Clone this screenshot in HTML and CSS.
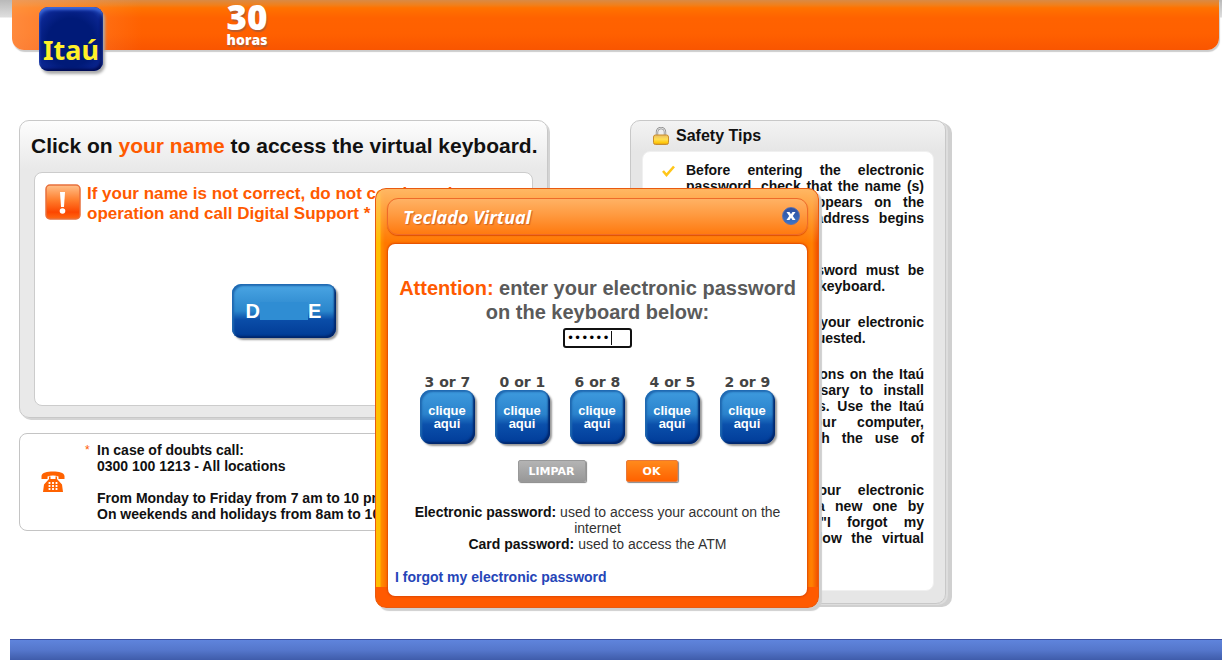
FILE: index.html
```
<!DOCTYPE html>
<html lang="en">
<head>
<meta charset="UTF-8">
<meta name="viewport" content="width=device-width, initial-scale=1.0">
<title>Itaú 30 horas</title>
<link rel="stylesheet" href="styles.css">
</head>
<body>
  <header class="header">
    <div class="header-bar">
      <div class="logo">Itaú</div>
      <div class="horas"><b>30</b><span>horas</span></div>
    </div>
  </header>

  <main class="content">
    <div class="left">
      <section class="panel access">
        <h1>Click on <em>your name</em> to access the virtual keyboard.</h1>
        <div class="panel-box">
          <div class="warning">
            <svg width="36" height="36" viewBox="0 0 36 36">
              <defs>
                <linearGradient id="warn" x1="0" y1="0" x2="0" y2="1">
                  <stop offset="0" stop-color="#ffc08a"/>
                  <stop offset="0.45" stop-color="#ff7d2c"/>
                  <stop offset="0.8" stop-color="#fc4600"/>
                  <stop offset="1" stop-color="#ff6a14"/>
                </linearGradient>
              </defs>
              <rect x="1" y="1" width="34" height="34" rx="4" fill="url(#warn)" stroke="#e8703c" stroke-width="1.5"/>
              <path d="M15 8h5l-1 15h-3z" fill="#fff"/>
              <circle cx="17.5" cy="27" r="2.8" fill="#fff"/>
            </svg>
            <p>If your name is not correct, do not continue the<br>operation and call Digital Support *</p>
          </div>
          <button type="button" class="name-button"><span>D</span><i></i><span>E</span></button>
        </div>
      </section>

      <section class="phone">
        <svg width="24" height="22" viewBox="0 0 24 22">
          <path d="M0.5 8V5C1 1.5 6 0.5 12 0.5S23 1.5 23.5 5V8H17.5V5.5C14 4.3 10 4.3 6.5 5.5V8Z" fill="#ff6200"/>
          <path d="M8 5.5V8L3 13.5 2 21h20l-1-7.5L16 8V5.5h-1.5V8h-5V5.5Z" fill="#ff6200"/>
          <path d="M8.5 11v8M12 11v8M15.5 11v8" stroke="#fff" stroke-width="1.8" stroke-dasharray="2 1"/>
        </svg>
        <span class="star">*</span>
        <div>
          <p>In case of doubts call:<br>0300 100 1213 - All locations</p>
          <p>From Monday to Friday from 7 am to 10 pm<br>On weekends and holidays from 8am to 10</p>
        </div>
      </section>
    </div>

    <aside class="panel tips">
      <h2>
        <svg width="16" height="18" viewBox="0 0 16 18">
          <defs>
            <linearGradient id="lock" x1="0" y1="0" x2="0" y2="1">
              <stop offset="0" stop-color="#e9bd63"/>
              <stop offset="0.45" stop-color="#ffdf55"/>
              <stop offset="0.8" stop-color="#ffc90c"/>
              <stop offset="1" stop-color="#db9a1c"/>
            </linearGradient>
          </defs>
          <path d="M4 9V5a4 4 0 0 1 8 0v4" fill="none" stroke="#8f8f8f" stroke-width="2.4"/>
          <path d="M4 9V5a4 4 0 0 1 8 0v4" fill="none" stroke="#dcdcdc" stroke-width="1"/>
          <rect x="0.5" y="8" width="15" height="9.5" rx="2" fill="url(#lock)" stroke="#c98e2e"/>
        </svg>
        Safety Tips
      </h2>
      <ul>
        <li>
          <svg width="13" height="12" viewBox="0 0 13 12"><path d="M1 6 4.5 10 12 1.5" fill="none" stroke="#ffc61a" stroke-width="2.6"/></svg>
          <span>Before entering the electronic</span>
          <span>password, check that the name (s)</span>
          <span>of the account appears on the</span>
          <span>browser and the address begins</span>
          <span>with https.</span>
        </li>
        <li>
          <span>Your personal password must be</span>
          <span>typed on the virtual keyboard.</span>
        </li>
        <li>
          <span>Never say or type your electronic</span>
          <span>cards when it is requested.</span>
        </li>
        <li>
          <span>Follow our instructions on the Itaú</span>
          <span>site if it is necessary to install</span>
          <span>alternative browsers. Use the Itaú</span>
          <span>Guardian on your computer,</span>
          <span>it guards you with the use of</span>
          <span>the site.</span>
        </li>
        <li>
          <span>If you forgot your electronic</span>
          <span>password, create a new one by</span>
          <span>choosing below "I forgot my</span>
          <span>password" just below the virtual</span>
          <span>keyboard.</span>
        </li>
      </ul>
    </aside>
  </main>

  <footer class="footer"></footer>

  <div class="modal" role="dialog" aria-label="Teclado Virtual">
    <div class="modal-title">
      <strong>Teclado Virtual</strong>
      <button type="button" class="close" aria-label="Close">
        <svg width="10" height="10" viewBox="0 0 10 10"><path d="M0.5 1h3L5 3.3 6.5 1h3L6.8 5l2.7 4h-3L5 6.7 3.5 9h-3L3.2 5z" fill="#fff"/></svg>
      </button>
    </div>
    <form class="modal-body">
      <label for="password"><em>Attention:</em> enter your electronic password<br>on the keyboard below:</label>
      <input type="password" id="password" value="123456" maxlength="8">

      <div class="keys">
        <div class="key"><span>3 or 7</span><button type="button">clique<br>aqui</button></div>
        <div class="key"><span>0 or 1</span><button type="button">clique<br>aqui</button></div>
        <div class="key"><span>6 or 8</span><button type="button">clique<br>aqui</button></div>
        <div class="key"><span>4 or 5</span><button type="button">clique<br>aqui</button></div>
        <div class="key"><span>2 or 9</span><button type="button">clique<br>aqui</button></div>
      </div>

      <div class="actions">
        <button type="reset" class="clear">LIMPAR</button>
        <button type="submit" class="ok">OK</button>
      </div>

      <p class="help"><b>Electronic password:</b> used to access your account on the internet<br><b>Card password:</b> used to access the ATM</p>
      <a href="#" class="forgot">I forgot my electronic password</a>
    </form>
  </div>
</body>
</html>
```
FILE: styles.css
```
* {
  box-sizing: border-box;
}
body {
  position: relative;
  display: flex;
  flex-direction: column;
  min-height: 100vh;
  margin: 0;
  background: #fff;
  color: #111;
  font-family: "Liberation Sans", Arial, sans-serif;
}
h1, h2, p, ul {
  margin: 0;
  padding: 0;
}
em {
  color: #ff5a00;
  font-style: normal;
}
button {
  padding: 0;
  border: 0;
  cursor: pointer;
}

/* Header */
.header {
  height: 120px;
  padding: 0 3px 0 12px;
  background: linear-gradient(#b9b9b9, #dedede 17px, #fff 18px);
}
.header-bar {
  display: flex;
  align-items: flex-start;
  height: 50px;
  padding-left: 27px;
  border-radius: 0 0 12px 12px;
  background:
    linear-gradient(90deg, rgba(255, 165, 100, 0.6), rgba(255, 120, 40, 0) 130px),
    linear-gradient(#d98a45, #f0801c 5px, #ff7200 8px, #ff6200 18px, #ff6000 34px, #f95500);
  box-shadow: 1px 2px 1px #ccc;
}
.logo {
  width: 64px;
  height: 64px;
  margin-top: 7px;
  border-radius: 9px;
  background: radial-gradient(circle at 50% 55%, #001a78 50%, #0a2590 75%, #2a55c8);
  box-shadow: inset 0 3px 3px #3f68d8, inset -2px -2px 3px #000a50, 2px 3px 3px #aaa;
  color: #fff02a;
  font: bold 27px/86px "Noto Sans", "Open Sans", sans-serif;
  text-align: center;
}
.horas {
  display: flex;
  flex-direction: column;
  width: 44px;
  margin-left: 122px;
  color: #fff;
  font-family: "Open Sans", sans-serif;
  font-weight: 800;
  text-align: center;
  text-shadow: 1px 2px 1px #b85c2c;
}
.horas b {
  font-size: 35px;
  font-weight: 800;
  line-height: 34px;
}
.horas span {
  font-size: 14px;
  line-height: 12px;
}

/* Panels behind the keyboard */
.content {
  display: flex;
  flex: 1;
  align-items: flex-start;
  gap: 80px;
  padding: 0 270px 32px 19px;
}
.left {
  flex: 1;
  max-width: 531px;
}
.panel {
  border: 1px solid #c8c8c8;
  border-radius: 10px;
  background: linear-gradient(#fdfdfd, #e9e9e9 48px);
  box-shadow: 2px 2px 0 #d4d4d4;
}
.access {
  max-width: 529px;
  padding: 12px 14px 11px;
}
.access h1 {
  margin: 0 -12px 13px -3px;
  font-size: 21px;
  line-height: 26px;
  white-space: nowrap;
}
.panel-box {
  height: 234px;
  padding: 11px 10px;
  border: 1px solid #ccc;
  border-radius: 8px;
  background: #fff;
}
.warning {
  display: flex;
  gap: 6px;
  color: #ff5a00;
  font-size: 17px;
  font-weight: bold;
  line-height: 20px;
}
.name-button {
  display: flex;
  align-items: center;
  justify-content: center;
  width: 104px;
  height: 54px;
  margin: 60px auto 0;
  border-radius: 9px;
  background: linear-gradient(#4ba6e4, #2a86cc 50%, #0a4da8 66%, #003a94);
  box-shadow: inset 2px 2px 2px #1f68b0, inset -2px -2px 2px #00266c, 2px 2px 2px #999;
  color: #fff;
  font: bold 20px "Liberation Sans", Arial, sans-serif;
}
.name-button i {
  width: 48px;
  height: 18px;
  background: #2f8dd3;
}
.phone {
  display: flex;
  align-items: center;
  height: 98px;
  margin-top: 15px;
  padding-left: 21px;
  border: 1px solid #c4c4c4;
  border-radius: 8px;
  font-size: 14px;
  font-weight: bold;
  line-height: 16px;
}
.phone p {
  white-space: nowrap;
}
.phone p + p {
  margin-top: 16px;
}
.star {
  align-self: flex-start;
  width: 12px;
  margin: 8px 0 0 20px;
  color: #ff5a00;
  font-size: 12px;
  font-weight: normal;
}

.tips {
  flex: 1;
  max-width: 316px;
  padding: 4px 11px 12px;
  background: linear-gradient(#f3f3f3, #e6e6e6 30px);
  box-shadow: 2px 1px 0 #ddd, 4px 2px 0 #d0d0d0, 6px 3px 0 #d0d0d0;
}
.tips h2 {
  display: flex;
  align-items: center;
  gap: 7px;
  margin-bottom: 4px;
  padding-left: 11px;
  font-size: 16px;
  line-height: 22px;
}
.tips ul {
  padding: 10px 9px 28px 43px;
  border: 1px solid #f0f0f0;
  border-radius: 8px;
  background: #fff;
  font-size: 14px;
  font-weight: bold;
  line-height: 16px;
  list-style: none;
}
.tips li {
  position: relative;
}
.tips li + li {
  margin-top: 20px;
}
.tips li svg {
  position: absolute;
  top: 3px;
  left: -24px;
}
.tips li span {
  display: block;
  white-space: nowrap;
  text-align: justify;
  text-align-last: justify;
}
.tips li span:last-child {
  text-align-last: left;
}

.footer {
  height: 21px;
  margin-left: 10px;
  border-top: 1px solid #3c50a0;
  background: linear-gradient(#5f84dc, #5577cc 50%, #3f5caa);
}

/* Virtual keyboard window */
.modal {
  position: absolute;
  top: 188px;
  left: 375px;
  width: 444px;
  padding: 10px 11px 11px 12px;
  border: 1px solid #e85a10;
  border-radius: 11px;
  background:
    linear-gradient(rgba(255, 190, 110, 0.9), rgba(255, 140, 20, 0) 54px),
    linear-gradient(transparent 398px, #ff5a00 398px),
    linear-gradient(90deg, #ffbe00 4px, #ff9000 5px, #ff7800 9px, #ff7800 430px, #ff8000 436px, #f05000);
  box-shadow: 3px 3px 1px #cfcfcf;
}
.modal-title {
  display: flex;
  align-items: center;
  justify-content: space-between;
  height: 37px;
  margin: -1px -1px 9px;
  padding: 0 7px 0 15px;
  border: 1px solid #ee6a2a;
  border-radius: 11px;
  background: linear-gradient(#ffb264, #ff9a40 45%, #ff7a10);
  box-shadow: 0 1px 1px #e05000;
}
.modal-title strong {
  color: #fff;
  font: italic bold 18px/34px "Open Sans", sans-serif;
  text-shadow: 1px 1px 1px #d06020;
}
.close {
  display: flex;
  align-items: center;
  justify-content: center;
  width: 18px;
  height: 18px;
  margin-bottom: 2px;
  border: 1px solid #5b6fae;
  border-radius: 50%;
  background: linear-gradient(#2e4f9e, #3c74c6);
}
.modal-body {
  display: flex;
  flex-direction: column;
  align-items: center;
  padding: 32px 7px 11px;
  border-radius: 7px;
  background: #fff;
  box-shadow: 0 0 2px 1px #e04800;
}
.modal-body label {
  color: #5a5a5a;
  font-size: 20px;
  font-weight: bold;
  line-height: 24px;
  text-align: center;
  white-space: nowrap;
}
.modal-body input {
  width: 69px;
  height: 20px;
  margin-top: 4px;
  padding: 0 2px;
  border: 2px solid #111;
  border-radius: 3px;
  /* text cursor after the sixth dot */
  background: linear-gradient(#111, #111) 46px 1px / 1px 14px no-repeat #fff;
  font: 12px "DejaVu Sans", Verdana, sans-serif;
  outline: 0;
}
.keys {
  display: flex;
  gap: 19px;
  margin-top: 26px;
}
.key {
  width: 56px;
  color: #444;
  font: bold 14px/16px "DejaVu Sans", Verdana, sans-serif;
  text-align: center;
  white-space: nowrap;
}
.key button {
  display: block;
  width: 55px;
  height: 54px;
  border-radius: 11px;
  background: linear-gradient(#3f9cdf, #2a82cc 45%, #0b50ab 64%, #003b98);
  box-shadow: inset 2px 2px 2px #1f68b0, inset -2px -2px 2px #00266c, 2px 2px 2px #999;
  color: #fff;
  font: bold 13px/13px "Liberation Sans", Arial, sans-serif;
}
.actions {
  display: flex;
  gap: 40px;
  margin-top: 16px;
}
.actions button {
  height: 22px;
  border: 1px solid #999;
  border-radius: 2px;
  box-shadow: 1px 1px 1px #888;
  color: #fff;
  font: bold 11px "DejaVu Sans", Verdana, sans-serif;
}
.actions .clear {
  width: 68px;
  background: linear-gradient(#b4b4b4, #989898);
}
.actions .ok {
  width: 52px;
  border-color: #e87838;
  background: linear-gradient(#ff8a1c, #ff6200);
}
.help {
  margin-top: 22px;
  padding: 0 16px;
  color: #333;
  font-size: 14px;
  line-height: 16px;
  text-align: center;
}
.help b {
  color: #111;
}
.forgot {
  align-self: flex-start;
  margin-top: 17px;
  color: #2545b8;
  font-size: 14px;
  font-weight: bold;
  line-height: 16px;
  text-decoration: none;
}
```
